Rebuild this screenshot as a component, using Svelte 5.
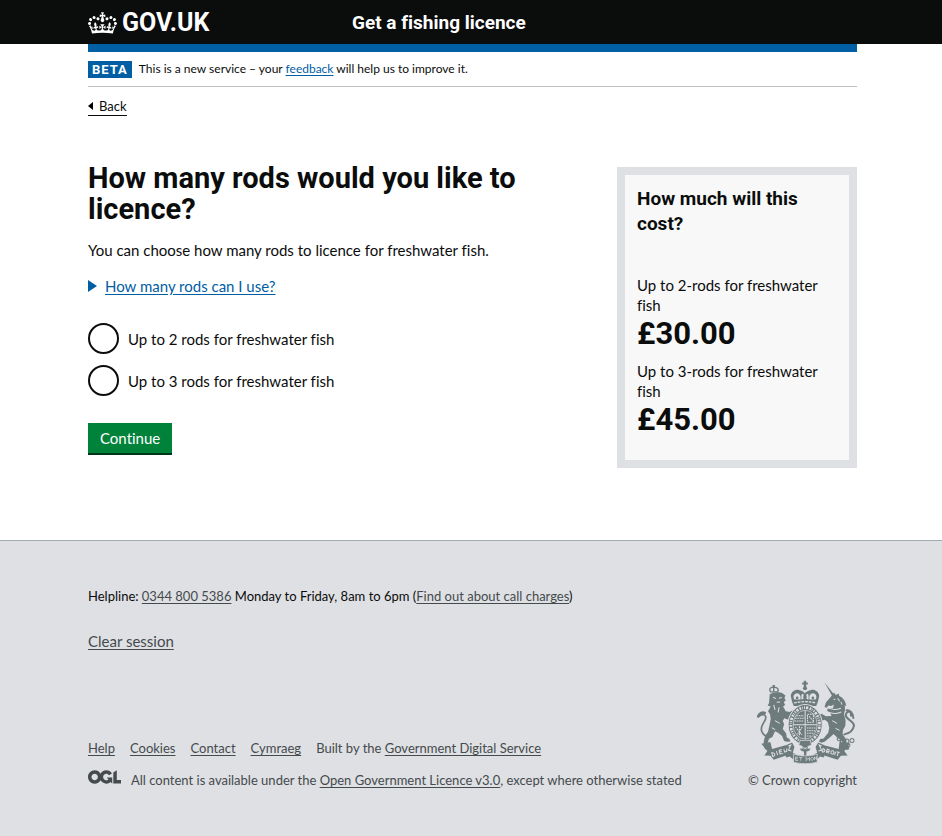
<script>
  let rods = $state('');

  const options = [
    { id: 'rods-2', value: '2', label: 'Up to 2 rods for freshwater fish' },
    { id: 'rods-3', value: '3', label: 'Up to 3 rods for freshwater fish' }
  ];

  const costs = [
    { label: 'Up to 2-rods for freshwater fish', price: '£30.00' },
    { label: 'Up to 3-rods for freshwater fish', price: '£45.00' }
  ];

  const footerLinks = ['Help', 'Cookies', 'Contact', 'Cymraeg'];
</script>

<header class="header">
  <div class="container header-row">
    <a class="logo" href="#home">
      <svg class="crown" viewBox="0 0 132 97" aria-hidden="true">
        <path fill="currentColor" fill-rule="evenodd" d="M25 30.2c3.5 1.5 7.7-.2 9.1-3.7 1.5-3.6-.2-7.8-3.9-9.2-3.6-1.4-7.6.3-9.1 3.9-1.4 3.5.3 7.5 3.9 9zM9 39.5c3.6 1.5 7.8-.2 9.2-3.7 1.5-3.6-.2-7.8-3.9-9.1-3.6-1.5-7.6.2-9.1 3.8-1.4 3.5.3 7.5 3.8 9zM4.4 57.2c3.5 1.5 7.7-.2 9.1-3.8 1.5-3.6-.2-7.7-3.9-9.1-3.5-1.5-7.6.3-9.1 3.8-1.4 3.5.3 7.6 3.9 9.1zm38.3-21.4c3.5 1.5 7.7-.2 9.1-3.8 1.5-3.6-.2-7.7-3.9-9.1-3.6-1.5-7.6.3-9.1 3.8-1.3 3.6.4 7.7 3.9 9.1zm64.4-5.6c-3.6 1.5-7.8-.2-9.1-3.7-1.5-3.6.2-7.8 3.8-9.2 3.6-1.4 7.7.3 9.2 3.9 1.3 3.5-.4 7.5-3.9 9zm15.9 9.3c-3.6 1.5-7.7-.2-9.1-3.7-1.5-3.6.2-7.8 3.7-9.1 3.6-1.5 7.7.2 9.2 3.8 1.5 3.5-.3 7.5-3.8 9zm4.7 17.7c-3.6 1.5-7.8-.2-9.2-3.8-1.5-3.6.2-7.7 3.9-9.1 3.6-1.5 7.7.3 9.2 3.8 1.3 3.5-.4 7.6-3.9 9.1zM89.3 35.8c-3.6 1.5-7.8-.2-9.2-3.8-1.4-3.6.2-7.7 3.9-9.1 3.6-1.5 7.7.3 9.2 3.8 1.4 3.6-.3 7.7-3.9 9.1zM69.7 17.7l8.9 4.7V9.3l-8.9 2.8c-.2-.3-.5-.6-.9-.9L72.4 0H59.6l3.5 11.2c-.3.3-.6.5-.9.9l-8.8-2.8v13.1l8.8-4.7c.3.3.6.7.9.9l-5 15.4v.1c-.2.8-.4 1.6-.4 2.4 0 4.1 3.1 7.5 7 8.1h.2c.3 0 .7.1 1 .1.4 0 .7 0 1-.1h.2c4-.6 7.1-4.1 7.1-8.1 0-.8-.1-1.7-.4-2.4V34l-5.1-15.4c.4-.2.7-.6 1-.9zM66 92.8c16.9 0 32.8 1.1 47.1 3.2 4-16.9 8.9-26.7 14-33.5l-9.6-3.4c1 4.9 1.1 7.2 0 10.2-1.5-1.4-3-4.3-4.2-8.7L108.6 76c2.8-2 5-3.2 7.5-3.3-4.4 9.4-10 11.9-13.6 11.2-4.3-.8-6.3-4.6-5.6-7.9 1-4.7 5.7-5.9 8-.5 4.3-8.7-3-11.4-7.6-8.8 7.1-7.2 7.9-13.5 2.1-21.1-8 6.1-8.1 12.3-4.5 20.8-4.7-5.4-12.1-2.5-9.5 6.2 3.4-5.2 7.9-2 7.2 3.1-.6 4.3-6.4 7.8-13.5 7.2-10.3-.9-10.9-8-11.2-13.8 2.5-.5 7.1 1.8 11 7.3L80.2 60c-4.1 4.4-8 5.3-12.3 5.4 1.4-4.4 8-11.6 8-11.6H55.5s6.4 7.2 7.9 11.6c-4.2-.1-8-1-12.3-5.4l1.4 16.4c3.9-5.5 8.5-7.7 10.9-7.3-.3 5.8-.9 12.8-11.1 13.8-7.2.6-12.9-2.9-13.5-7.2-.7-5 3.8-8.3 7.1-3.1 2.7-8.7-4.6-11.6-9.4-6.2 3.7-8.5 3.6-14.7-4.6-20.8-5.8 7.6-5 13.9 2.2 21.1-4.7-2.6-11.9.1-7.7 8.8 2.3-5.5 7.1-4.2 8.1.5.7 3.3-1.3 7.1-5.7 7.9-3.5.7-9-1.8-13.5-11.2 2.5.1 4.7 1.3 7.5 3.3l-4.7-15.4c-1.2 4.4-2.7 7.2-4.3 8.7-1.1-3-.9-5.3 0-10.2l-9.5 3.4c5 6.9 9.9 16.7 14 33.5 14.8-2.1 30.8-3.2 47.7-3.2z" />
      </svg>
      <span>GOV.UK</span>
    </a>
    <a class="service" href="#service">Get a fishing licence</a>
  </div>
</header>

<div class="container">
  <div class="bar"></div>
  <div class="phase">
    <strong class="tag">BETA</strong>
    <span>This is a new service – your <a href="#feedback">feedback</a> will help us to improve it.</span>
  </div>
  <a class="back" href="#back">
    <svg viewBox="0 0 5 8" aria-hidden="true"><path d="M5 0v8L0 4z" /></svg>Back
  </a>

  <div class="columns">
    <main>
      <h1 id="question">How many rods would you like to licence?</h1>
      <p class="intro">You can choose how many rods to licence for freshwater fish.</p>
      <details>
        <summary>
          <svg viewBox="0 0 9 12" aria-hidden="true"><path d="M0 0v12l9-6z" /></svg>
          <span>How many rods can I use?</span>
        </summary>
      </details>
      <form onsubmit={(e) => e.preventDefault()}>
        <div class="radios" role="radiogroup" aria-labelledby="question">
          {#each options as option (option.id)}
            <div class="radio">
              <input type="radio" id={option.id} name="rods" value={option.value} bind:group={rods} />
              <label for={option.id}>{option.label}</label>
            </div>
          {/each}
        </div>
        <button class="continue" type="submit">Continue</button>
      </form>
    </main>

    <aside>
      <h2>How much will this cost?</h2>
      {#each costs as cost (cost.price)}
        <p class="cost-label">{cost.label}</p>
        <p class="price">{cost.price}</p>
      {/each}
    </aside>
  </div>
</div>

<footer>
  <div class="container">
    <p class="helpline">
      Helpline: <a href="#phone">0344 800 5386</a> Monday to Friday, 8am to 6pm (<a href="#charges">Find out about call charges</a>)
    </p>
    <a class="clear" href="#clear">Clear session</a>

    <div class="meta">
      <div class="meta-main">
        <ul>
          {#each footerLinks as link (link)}
            <li><a href="#{link.toLowerCase()}">{link}</a></li>
          {/each}
          <li>Built by the <a href="#gds">Government Digital Service</a></li>
        </ul>
        <div class="licence">
          <svg class="ogl" viewBox="0 0 483.2 195.7" aria-hidden="true">
            <path fill="currentColor" d="M421.5 142.8V.1l-50.7 32.3v161.1h112.4v-50.7zm-122.3-9.6A47.12 47.12 0 0 1 221 97.8c0-26 21.1-47.1 47.1-47.1 16.7 0 31.4 8.7 39.7 21.8l42.7-27.2A97.63 97.63 0 0 0 268.1 0c-36.5 0-68.3 20.1-85.1 49.7A98 98 0 0 0 97.8 0C43.9 0 0 43.9 0 97.8s43.9 97.8 97.8 97.8c36.5 0 68.3-20.1 85.1-49.7a97.76 97.76 0 0 0 149.6 25.4l19.4 22.2h3v-87.8h-80l24.3 27.5zM97.8 145c-26 0-47.1-21.1-47.1-47.1s21.1-47.1 47.1-47.1 47.1 21.1 47.1 47.1S123.8 145 97.8 145" />
          </svg>
          <span>All content is available under the <a href="#ogl">Open Government Licence v3.0</a>, except where otherwise stated</span>
        </div>
      </div>

      <a class="copyright" href="#copyright">
        <svg class="arms" viewBox="50 30 302 250" aria-hidden="true">
          <!-- crown -->
          <g fill="#6e7b7d">
            <path d="M193 32h7v5h5v6h-5v7h-7v-7h-5v-6h5z" />
            <circle cx="196.500" cy="54" r="6" />
            <path d="M158 95l-4-18c1-12 12-20 24-18 8 1 15 5 18 10 4-5 11-9 19-10 12-2 23 6 24 18l-4 18-5 12h-67z" />
          </g>
          <g fill="none" stroke="#dee0e3" stroke-width="6">
            <path d="M165 88c-6-9-1-19 8-19 8 0 12 9 10 19zM228 88c6-9 1-19-8-19-8 0-12 9-10 19z" fill="#dee0e3" stroke="none" />
            <path d="M190 72c-2 5-2 10-1 15M203 72c2 5 2 10 1 15" />
            <path d="M164 98c22-5 45-5 66 0" stroke-width="4" stroke-dasharray="8 3" />
          </g>
          <g fill="#6e7b7d">
            <circle cx="173" cy="83" r="4" /><circle cx="220" cy="83" r="4" />
          </g>
          <!-- lion -->
          <path fill="none" stroke="#6e7b7d" stroke-width="4" d="M93 64c-5-8 0-14 10-12 8-2 17 4 12 12M103 63V44M99 47h8M92 65h24" />
          <g fill="#6e7b7d">
            <path d="M91 72c10-7 28-8 38-3l9 7-3 7 4 8-6 4 4 9-6 5 8 14 12 2 8-5 4 8-5 7-8 2 6 7-7 5-14-5-5 7 4 11-4 14 10 13 2 12 8 5 3 7-10 1-9-2-6-15-12-10-9-4-8 17-10 5-4 12 3 11 8 5-1 5h-15l-5-5-2-19 4-17 9-13 4-18 4-20-2-14-6-9 8-14-9-3 4-8z" />
          </g>
          <g fill="none" stroke="#6e7b7d" stroke-width="8" stroke-linecap="round" stroke-linejoin="round">
            <path d="M82 198c-14-6-20-20-13-34 6-12 12-16 10-25-2-8-12-8-23 1" stroke-width="5" />
            <path d="M57 137c4-9 13-12 19-9" />
          </g>
          <path fill="none" stroke="#dee0e3" stroke-width="3" d="M101 81l9 4M119 84l8-2M112 96l10-1M103 104l4 15M119 111l-3 15M107 151l14 8M97 172l10 6" />
          <!-- unicorn -->
          <g fill="#6e7b7d">
            <path d="M255 37l30 38-7 3z" />
            <path d="M277 76l6-9 6 7 8-4 2 7c11 4 20 17 21 31l-5-3c2 9 1 18-2 26l5 19-1 17-7 12-1 13 12 17-2 13 10 8-2 8h-9l-9-11-1-13-15-13-11-10-13 12-13 10-10 4-8-4 4-7 10-2 14-17 3-15-4-16-9-8-13 4-6-6 6-4-5-8 8-4 13 8 17-1-4-9-9-6 1-7 16-1 3-11-8 4-8-1-5 7-7-3 4-13z" />
          </g>
          <g fill="none" stroke="#6e7b7d" stroke-linecap="round">
            <path d="M314 192c15-3 27-13 29-26 0-12-18-16-24-28-3-10 6-16 14-14" stroke-width="6" />
            <path d="M321 120c11-1 14 8 13 16M334 125c5 5 7 12 7 18" stroke-width="6" />
          </g>
          <g fill="none" stroke="#dee0e3" stroke-width="3">
            <path d="M261 110c12 9 27 10 43 4M257 121c14 10 32 11 48 4" />
            <path d="M294 84l6 9M304 95l3 8M282 87l5 1M278 151l14 8M288 174l12 6" />
          </g>
          <g fill="none" stroke="#6e7b7d" stroke-width="3">
            <circle cx="299" cy="205" r="6" /><circle cx="308" cy="215" r="6" /><circle cx="322" cy="212" r="6" /><circle cx="337" cy="210" r="6" /><circle cx="326" cy="224" r="5" />
          </g>
          <!-- garter and shield -->
          <ellipse cx="197" cy="163" rx="51" ry="60" fill="#6e7b7d" stroke="#dee0e3" stroke-width="3" />
          <ellipse cx="197" cy="163" rx="43" ry="51" fill="none" stroke="#dee0e3" stroke-width="8" stroke-dasharray="3 3 7 4 5 3 2 4" />
          <ellipse cx="197" cy="163" rx="36" ry="43" fill="#6e7b7d" stroke="#dee0e3" stroke-width="2" />
          <g fill="none" stroke="#dee0e3" stroke-width="3">
            <path d="M197 120v86M161 163h72" />
            <path d="M171 136h22M167 144h26M165 152h28M204 132h18v24h-18zM209 138l10 12M168 170l20 24M188 170l-14 22M180 168v29M202 173h27M202 181h25M202 189h21M202 197h14" stroke-dasharray="5 2" />
          </g>
          <path fill="#6e7b7d" stroke="#dee0e3" stroke-width="2" d="M182 210h30l4 14-19 7-19-7z" />
          <!-- rose and thistle -->
          <path fill="#6e7b7d" d="M194 258l-1-15-8-2-4-7 9 1-1-6 8-8 8 8-1 6 9-1-4 7-8 2-1 15z" />
          <path fill="none" stroke="#dee0e3" stroke-width="2" d="M192 236l10-5M191 231l11 5" />
          <!-- motto scroll -->
          <g fill="#6e7b7d">
            <path d="M66 220l27-5 5 21 43-12 14 18-8 11-44 15-10-12-18-1 9-13z" />
            <path d="M331 220l-31-6-3 22-46-12-12 18 8 11 47 15 10-12 20-1-10-13z" />
            <path d="M141 224l17-8 7 14-5 17 10 5-10 14-9-8-10 3-3-5 10-14z" />
            <path d="M253 224l-17-8-8 14 5 17-10 5 10 14 9-8 10 3 3-5-9-14z" />
            <path d="M162 251c23 7 47 7 71 0v24c-24 6-48 6-71 0z" stroke="#dee0e3" stroke-width="2" />
          </g>
          <g fill="none" stroke="#dee0e3" stroke-width="3">
            <path d="M97 247l3 11c9 0 8-13-3-11zM111 242l4 12M127 237l-8 3 3 11 9-3M121 245l6-2M133 236l3 9 6-2 0-9" />
            <path d="M251 234l-3 10c9 3 11-7 3-10zM260 247l3-11 6 2-1 6-5-1 4 6M280 241c-6-2-9 8-3 10 6 1 8-8 3-10zM288 244l-3 10M291 244l9 2M296 245l-3 11" />
            <path d="M176 260h-8v10h8M169 265h6M179 261h10M184 261v10M200 272v-11l5 6 5-6v11M214 266c0-7 8-7 8-1s-8 6-8 1zM225 269v-10l6 8v-9" stroke-width="2" />
            <path d="M147 227l7-3-7 15 9 3M246 227l-7-3 7 15-9 3" />
          </g>
        </svg>
        <span>© Crown copyright</span>
      </a>
    </div>
  </div>
</footer>

<style>
  :global(body) {
    margin: 0;
    background: #fff;
    color: #0b0c0c;
    font-family: Lato, Roboto, "Liberation Sans", sans-serif;
    font-size: 15px;
    font-variant-ligatures: none;
    line-height: 20px;
  }
  .container {
    max-width: 769px;
    margin: 0 auto;
    padding: 0 85px 0 88px;
  }
  h1, h2, p, ul { margin: 0; padding: 0; }
  a { color: #005ea5; text-underline-offset: 2px; }
  h1, h2, .price, .logo, .service, .tag { font-family: Roboto, "Liberation Sans", sans-serif; font-weight: 700; }

  .header { padding-top: 2px; background: #0b0c0c; }
  .header-row { display: flex; align-items: center; height: 42px; }
  .logo, .service { color: #fff; text-decoration: none; }
  .logo { display: flex; align-items: center; gap: 5px; flex: 0 0 264px; font-size: 25px; }
  .crown { width: 29px; height: 22px; }
  .service { font-size: 19px; }

  .bar { height: 8px; background: #005ea5; }
  .phase {
    display: flex;
    align-items: center;
    gap: 7px;
    height: 34px;
    border-bottom: 1px solid #bfc1c3;
    font-size: 12px;
    line-height: 16px;
  }
  .tag { padding: 0 4px; background: #005ea5; color: #fff; font-size: 13px; line-height: 17px; letter-spacing: 1px; }
  .back {
    display: inline-flex;
    align-items: center;
    gap: 6px;
    margin-top: 10px;
    border-bottom: 1px solid #0b0c0c;
    color: #0b0c0c;
    font-size: 13px;
    line-height: 18px;
    text-decoration: none;
  }
  .back svg { width: 5px; height: 8px; }

  .columns { display: flex; align-items: flex-start; gap: 24px; padding: 51px 0 72px; }
  main { flex: 1; }
  h1 { font-size: 29px; line-height: 31px; margin-top: -4px; }
  .intro { margin-top: 15px; }
  summary { display: flex; align-items: center; gap: 8px; margin-top: 16px; color: #005ea5; list-style: none; cursor: pointer; }
  summary::-webkit-details-marker { display: none; }
  summary svg { width: 9px; height: 12px; fill: currentColor; }
  summary span { text-decoration: underline; text-underline-offset: 2px; }
  .radios { display: flex; flex-direction: column; gap: 11px; margin-top: 27px; }
  .radio { display: flex; align-items: center; gap: 9px; }
  .radio input {
    appearance: none;
    box-sizing: border-box;
    width: 31px;
    height: 31px;
    margin: 0;
    border: 2px solid #0b0c0c;
    border-radius: 50%;
    background: #fff;
  }
  .radio input:checked { background: radial-gradient(#0b0c0c 8px, #fff 9px); }
  .continue {
    margin-top: 27px;
    padding: 5px 12px;
    border: 0;
    background: #00823b;
    box-shadow: 0 2px 0 #003618;
    color: #fff;
    font: inherit;
  }

  aside {
    flex: 0 0 240px;
    box-sizing: border-box;
    padding: 11px 12px 21px;
    border: 8px solid #dee0e3;
    background: #f8f8f8;
  }
  h2 { margin-bottom: 39px; font-size: 19px; line-height: 25px; }
  .price { margin-bottom: 8px; font-size: 31px; line-height: 38px; }
  .price:last-child { margin-bottom: 0; }

  footer { padding: 45px 0 46px; border-top: 1px solid #a1acb2; background: #dee0e3; }
  footer a { color: #454a4d; }
  .helpline { margin-bottom: 25px; font-size: 13px; }
  .meta { display: flex; align-items: flex-end; justify-content: space-between; margin-top: 29px; color: #454a4d; font-size: 13px; }
  ul { display: flex; flex-wrap: wrap; gap: 15px; list-style: none; }
  .licence { display: flex; align-items: flex-start; gap: 10px; margin-top: 12px; }
  .ogl { width: 33px; height: 14px; }
  .copyright { display: flex; flex-direction: column; align-items: flex-end; gap: 6px; text-decoration: none; }
  .arms { width: 101px; height: 84px; }
</style>
